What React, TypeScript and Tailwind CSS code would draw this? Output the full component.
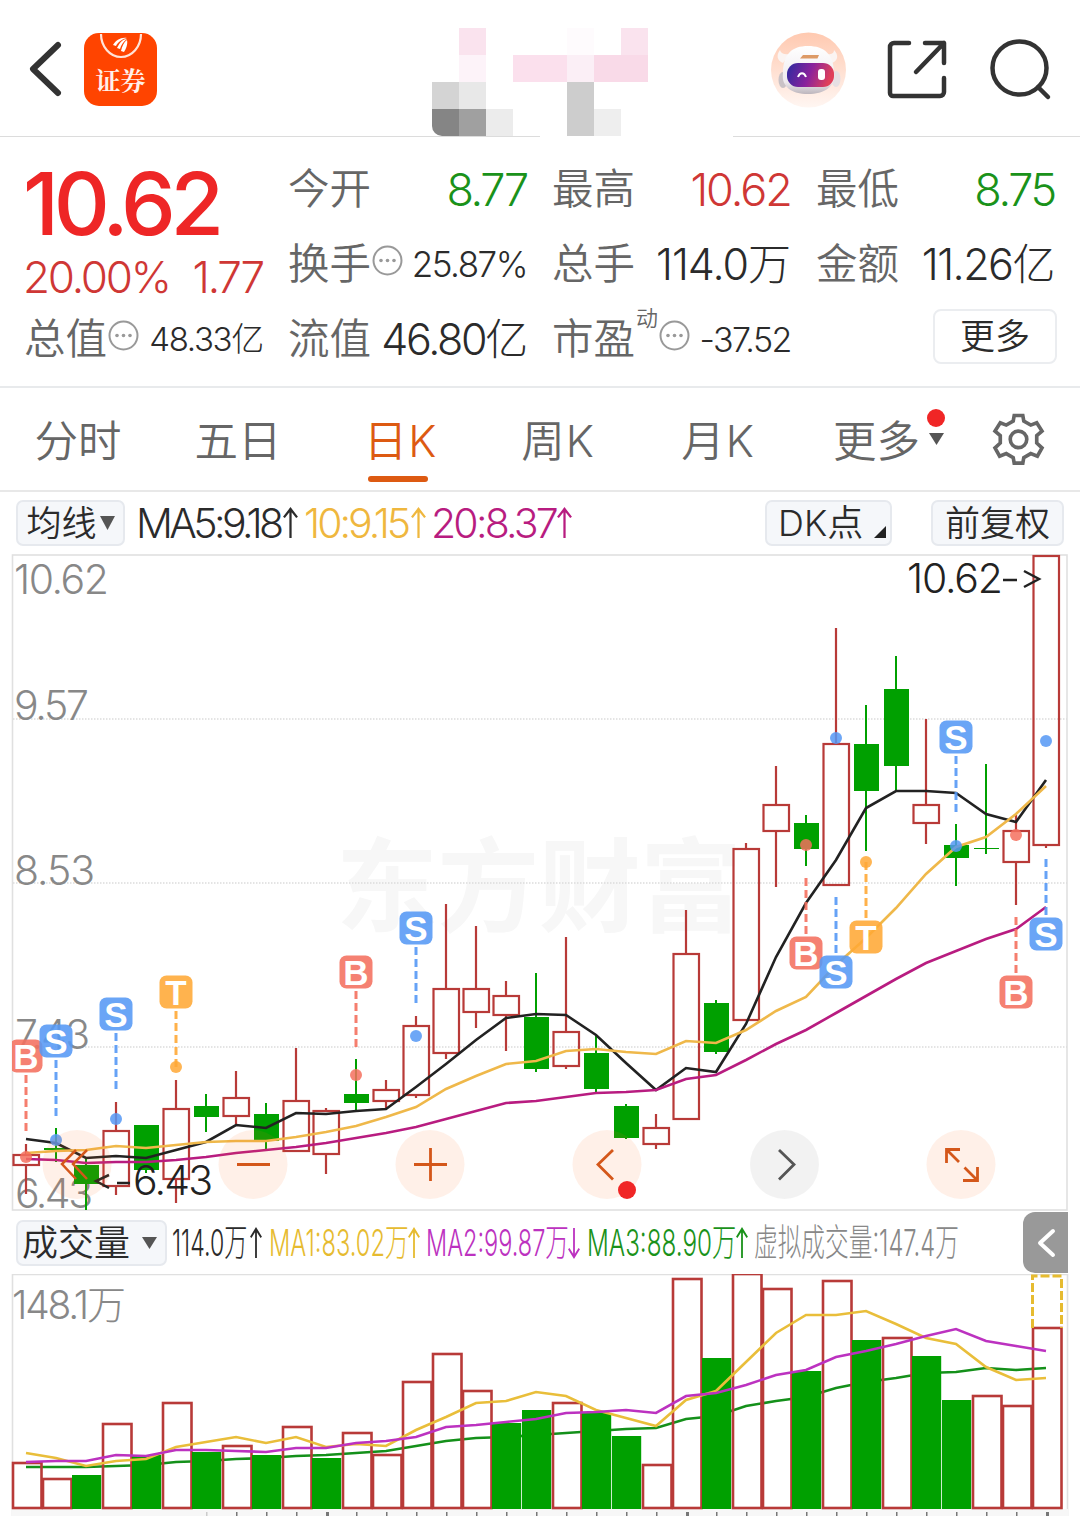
import type { ReactNode } from "react";

const STEP = 30;
const FIRST_X = 26;
const cx = (i: number) => FIRST_X + i * STEP;

const RED = "#b83a38";
const GREEN = "#00a000";

type Candle = [up: number, high: number, top: number, bottom: number, low: number];

const CANDLES: Candle[] = [
  [1, 1144, 1155, 1165, 1194],
  [0, 1128, 1148, 1150, 1162],
  [0, 1158, 1165, 1184, 1210],
  [1, 1102, 1131, 1186, 1195],
  [0, 1125, 1125, 1170, 1173],
  [1, 1080, 1109, 1179, 1203],
  [0, 1094, 1106, 1117, 1132],
  [1, 1071, 1098, 1116, 1124],
  [0, 1103, 1114, 1141, 1150],
  [1, 1048, 1101, 1151, 1151],
  [1, 1108, 1111, 1154, 1174],
  [0, 1059, 1094, 1103, 1111],
  [1, 1080, 1090, 1101, 1108],
  [1, 1016, 1026, 1095, 1098],
  [1, 904, 989, 1053, 1059],
  [1, 926, 989, 1012, 1028],
  [1, 981, 996, 1015, 1051],
  [0, 973, 1017, 1069, 1072],
  [1, 937, 1032, 1066, 1069],
  [0, 1036, 1053, 1089, 1092],
  [0, 1104, 1106, 1138, 1139],
  [1, 1114, 1128, 1144, 1149],
  [1, 910, 954, 1119, 1119],
  [0, 1000, 1003, 1052, 1054],
  [1, 843, 849, 1020, 1020],
  [1, 766, 805, 831, 887],
  [0, 815, 823, 849, 866],
  [1, 628, 744, 885, 885],
  [0, 705, 744, 791, 851],
  [0, 656, 689, 766, 791],
  [1, 719, 805, 823, 844],
  [0, 824, 845, 858, 886],
  [0, 764, 848, 849, 854],
  [1, 815, 831, 862, 905],
  [1, 556, 556, 845, 848],
];

const MA5 = [1139, 1143, 1158, 1156, 1158, 1150, 1142, 1125, 1128, 1113, 1114, 1111, 1109, 1087, 1064, 1040, 1018, 1014, 1015, 1035, 1063, 1090, 1068, 1072, 1024, 957, 903, 860, 808, 791, 791, 793, 814, 822, 780];
const MA10 = [1153, 1151, 1150, 1146, 1148, 1145, 1142, 1141, 1141, 1137, 1132, 1126, 1117, 1107, 1089, 1076, 1064, 1061, 1051, 1049, 1052, 1054, 1041, 1043, 1030, 1011, 997, 965, 938, 908, 874, 847, 837, 814, 786];
const MA20 = [1159, 1160, 1163, 1162, 1162, 1160, 1157, 1153, 1150, 1147, 1143, 1138, 1133, 1127, 1119, 1111, 1103, 1101, 1097, 1093, 1092, 1090, 1079, 1075, 1060, 1044, 1030, 1013, 996, 979, 963, 951, 939, 929, 907];

// [is red, top of the bar]
const VOLUMES: [number, number][] = [
  [1, 1463], [1, 1479], [0, 1476], [1, 1424], [0, 1456], [1, 1403], [0, 1453],
  [1, 1446], [0, 1456], [1, 1427], [0, 1459], [1, 1433], [1, 1455], [1, 1382],
  [1, 1354], [1, 1391], [0, 1424], [0, 1411], [1, 1403], [0, 1414], [0, 1437],
  [1, 1465], [1, 1279], [0, 1359], [1, 1274], [1, 1289], [0, 1372], [1, 1281],
  [0, 1341], [1, 1338], [0, 1357], [0, 1401], [1, 1396], [1, 1406], [1, 1328],
];
const VOL_MA1 = [1453, 1458, 1466, 1461, 1459, 1447, 1442, 1437, 1443, 1437, 1447, 1444, 1446, 1430, 1417, 1403, 1401, 1392, 1396, 1410, 1418, 1426, 1400, 1391, 1362, 1333, 1315, 1315, 1311, 1324, 1338, 1344, 1367, 1380, 1378];
const VOL_MA2 = [1462, 1461, 1461, 1455, 1456, 1450, 1450, 1451, 1452, 1448, 1448, 1443, 1441, 1437, 1427, 1425, 1422, 1419, 1413, 1412, 1410, 1413, 1396, 1393, 1385, 1375, 1370, 1357, 1351, 1344, 1336, 1329, 1341, 1346, 1351];
const VOL_MA3 = [1467, 1467, 1467, 1466, 1465, 1462, 1461, 1459, 1458, 1456, 1455, 1453, 1451, 1446, 1441, 1438, 1437, 1435, 1433, 1431, 1429, 1428, 1419, 1416, 1406, 1401, 1397, 1388, 1382, 1378, 1373, 1372, 1368, 1370, 1368];

type Kind = "B" | "S" | "T";
const MARK_COLOR: Record<Kind, string> = { B: "#f4705e", S: "#5598f5", T: "#ffa836" };

// candle index, letter, badge centre, signal dot, start of the dashes
const MARKS: [number, Kind, number, number, number][] = [
  [0, "B", 1056, 1157, 1075],
  [1, "S", 1041, 1140, 1060],
  [3, "S", 1014, 1119, 1033],
  [5, "T", 992, 1067, 1011],
  [11, "B", 972, 1075, 991],
  [13, "S", 928, 1036, 947],
  [26, "B", 953, 845, 878],
  [27, "S", 972, 738, 897],
  [28, "T", 937, 862, 862],
  [31, "S", 737, 846, 756],
  [33, "B", 992, 835, 917],
  [34, "S", 934, 741, 859],
];

// 8 x 4 blocks over the stock name
const MOSAIC = [
  "", "#fae3ee", "", "", "", "#fefbfd", "", "#fae3ee",
  "", "#fdf3f9", "", "#fbe0ed", "#fbe0ed", "#fbeff6", "#f9dae8", "#f9dae8",
  "#d4d4d4", "#e8e8e8", "", "", "", "#cdcdcd", "", "",
  "#858585", "#a0a0a0", "#ececec", "", "", "#cdcdcd", "#eeeeee", "",
];

const line = (ys: number[]) => ys.map((y, i) => `${cx(i)},${y}`).join(" ");

function Header() {
  return (
    <header className="flex h-[137px] flex-col">
      <div className="flex h-[136px] items-start">
        <svg className="ml-[28px] mt-[39px] h-[60px] w-[36px]" viewBox="0 0 36 60" fill="none" stroke="#333" strokeWidth="6" strokeLinecap="round" strokeLinejoin="round">
          <path d="M30 6 5 30l25 24" />
        </svg>
        <div className="ml-[20px] mt-[33px] flex h-[73px] w-[73px] flex-col items-center rounded-[15px] bg-[#ff4400]">
          <svg className="h-[27px] w-[44px]" viewBox="0 0 44 27" fill="none">
            <path d="M2 1a20 23 0 0 0 40 0" stroke="#ffe3d8" strokeWidth="2.200" />
            <path d="M14 12c3-5 8-8 14-7-5 1-9 4-11 8z M18 15c3-6 6-9 10-9-4 3-6 6-7 10z M22 18c1-5 3-9 6-11 1 4-1 9-3 12z" fill="#fff" />
          </svg>
          <span className="mt-[2px] font-['Noto_Serif_CJK_SC','Noto_Sans_CJK_SC',serif] text-[25px] font-bold leading-[34px] text-[#fff1ea]">证券</span>
        </div>
        <div className="ml-[275px] mt-[28px] grid h-[108px] w-[216px] grid-cols-8 grid-rows-4 overflow-hidden rounded-bl-[10px]">
          {MOSAIC.map((c, i) => (
            <div key={i} style={{ backgroundColor: c || "transparent" }} />
          ))}
        </div>
        <svg className="ml-[122px] mt-[31px] h-[78px] w-[78px]" viewBox="0 0 78 78">
          <defs>
            <linearGradient id="halo" x1="0" y1="0" x2="0" y2="1">
              <stop offset="0" stopColor="#ffc9b0" />
              <stop offset="1" stopColor="#fff6f2" />
            </linearGradient>
            <linearGradient id="visor" x1="0" y1="0" x2="1" y2="0.2">
              <stop offset="0" stopColor="#2b2ba0" />
              <stop offset="0.55" stopColor="#8a229c" />
              <stop offset="1" stopColor="#e0405a" />
            </linearGradient>
            <linearGradient id="shell" x1="0" y1="0" x2="0" y2="1">
              <stop offset="0" stopColor="#ffffff" />
              <stop offset="0.75" stopColor="#eeeaee" />
              <stop offset="1" stopColor="#bdb6bd" />
            </linearGradient>
          </defs>
          <circle cx="38.500" cy="39" r="37.500" fill="url(#halo)" />
          <path d="M10 19c-4 5-3 11 3 13l7-9c-5 1-9 0-10-4z M64 19c5 5 4 11-2 13l-7-9c5 1 9 0 9-4z" fill="#fbf4f2" />
          <ellipse cx="13" cy="49" rx="4.500" ry="8" fill="#c9c2c6" />
          <ellipse cx="66" cy="48" rx="4.500" ry="8" fill="#e6e0e3" />
          <path d="M13 42c0-19 9-27 25-27s26 8 26 27c2 14-10 21-26 21s-27-7-25-21z" fill="url(#shell)" />
          <rect x="17" y="32" width="47" height="24" rx="11" fill="url(#visor)" />
          <path d="M30 27.500 33 24h16l-1.500 3.500z" fill="#dd9a66" />
          <path d="M28 46c2-5 6-5 8 0" fill="none" stroke="#fff" strokeWidth="2" />
          <rect x="48" y="38" width="7" height="11" rx="3" fill="#fff" />
        </svg>
        <svg className="ml-[38px] mt-[38px] h-[62px] w-[62px]" viewBox="0 0 62 62" fill="none" stroke="#333" strokeWidth="4.500" strokeLinecap="round" strokeLinejoin="round">
          <path d="M23 5H8a4 4 0 0 0-4 4v46a3 3 0 0 0 3 3h47a4 4 0 0 0 4-4V40" />
          <path d="M39 5h19v20M58 5 30 34" />
        </svg>
        <svg className="ml-[41px] mt-[37px] h-[64px] w-[64px]" viewBox="0 0 64 64" fill="none" stroke="#333" strokeWidth="4.500" strokeLinecap="round">
          <ellipse cx="30.500" cy="31" rx="27" ry="26.500" />
          <path d="m49 50 10 10" />
        </svg>
      </div>
      <div className="flex h-px justify-between">
        <div className="w-[540px] bg-[#dcdcdc]" />
        <div className="w-[347px] bg-[#dcdcdc]" />
      </div>
    </header>
  );
}

function Hint() {
  return (
    <svg className="mb-[8px] ml-px h-[31px] w-[31px] shrink-0" viewBox="0 0 31 31">
      <circle cx="15.500" cy="15.500" r="14" fill="none" stroke="#999" strokeWidth="2" />
      <circle cx="9" cy="15.500" r="1.800" fill="#999" />
      <circle cx="15.500" cy="15.500" r="1.800" fill="#999" />
      <circle cx="22" cy="15.500" r="1.800" fill="#999" />
    </svg>
  );
}

function Arrow({ className, down }: { className: string; down?: boolean }) {
  return (
    <svg className={`inline-block shrink-0 overflow-visible ${className}`} viewBox="0 0 16 32" preserveAspectRatio="none" fill="none" stroke="currentColor" strokeWidth="2.400">
      <path d={down ? "M8 0v31M1 22l7 9 7-9" : "M8 32V1M1 10l7-9 7 9"} />
    </svg>
  );
}

function Stat({ label, className, children }: { label: ReactNode; className: string; children: string }) {
  return (
    <div className="flex h-[75px] items-center justify-between whitespace-nowrap">
      <span className="-ml-px flex items-center text-[41.500px] font-[350] text-[#666]">{label}</span>
      <span className={className}>{children}</span>
    </div>
  );
}

function Quote() {
  return (
    <section className="grid h-[251px] grid-cols-4 content-start gap-x-[26px] border-b-2 border-[#e8eaec] px-[25px] pt-[15px]">
      <div className="row-span-2 h-[150px] whitespace-nowrap">
        <div className="-ml-[2px] h-[92px] pt-[7px] text-[87px] font-[450] leading-[90px] tracking-[-5.300px] text-[#ee2626]">10.62</div>
        <div className="-ml-[2px] flex h-[58px] items-center justify-between pt-[8px] text-[44px] leading-[50px] tracking-[-2.200px] text-[#cf3735]">
          <span>20.00%</span>
          <span>1.77</span>
        </div>
      </div>
      <Stat label="今开" className="text-[45px] tracking-[-2.300px] text-[#1a921a]">8.77</Stat>
      <Stat label="最高" className="text-[45px] tracking-[-2px] text-[#cf3735]">10.62</Stat>
      <Stat label="最低" className="text-[45px] tracking-[-2.300px] text-[#1a921a]">8.75</Stat>
      <Stat label={<>换手<Hint /></>} className="text-[35px] tracking-[-1.500px]">25.87%</Stat>
      <Stat label="总手" className="mr-px text-[43px] tracking-[-1px]">114.0万</Stat>
      <Stat label="金额" className="mr-px text-[43px] tracking-[-1.500px]">11.26亿</Stat>
      <Stat label={<>总值<Hint /></>} className="text-[33px] tracking-[-1.300px]">48.33亿</Stat>
      <Stat label="流值" className="mr-px text-[43px] tracking-[-2.300px]">46.80亿</Stat>
      <Stat
        label={<>市盈<span className="ml-px self-start text-[22px] leading-[20px]">动</span><Hint /></>}
        className="text-[34px] tracking-[-1.500px]"
      >
        -37.52
      </Stat>
      <button className="-mr-[2px] mt-[7px] flex h-[55px] w-[124px] items-center justify-center justify-self-end rounded-[8px] border-2 border-[#ebedf0] text-[35px] font-[350]">
        更多
      </button>
    </section>
  );
}

const TABS = [
  { label: "分时", cls: "ml-[34px] w-[88px]" },
  { label: "五日", cls: "ml-[72px] w-[88px]" },
  { label: "日K", cls: "ml-[80px] w-[72px] tracking-[1px]", active: true },
  { label: "周K", cls: "ml-[85px] w-[78px] tracking-[1px]" },
  { label: "月K", cls: "ml-[82px] w-[78px] tracking-[1px]" },
];

function Tabs() {
  return (
    <nav className="flex h-[104px] shrink-0 items-center border-b-2 border-[#e8e8e8] text-[43.500px] font-[350] text-[#666]">
      {TABS.map((t) => (
        <div key={t.label} className={`flex h-full flex-col items-center whitespace-nowrap ${t.cls}`}>
          <span className={`mt-[21px] leading-[64px] ${t.active ? "pl-[5px] text-[#dd5a12]" : ""}`}>{t.label}</span>
          {t.active && <span className="mt-[3px] h-[6px] w-[60px] shrink-0 rounded-full bg-[#dd5a12]" />}
        </div>
      ))}
      <div className="ml-[76px] flex h-full w-[113px] items-start">
        <span className="mt-[21px] leading-[64px]">更多</span>
        <div className="ml-[7px] mt-[21px] flex flex-col items-center gap-[6px]">
          <span className="h-[18px] w-[18px] rounded-full bg-[#f02626]" />
          <svg className="h-[12px] w-[15px]" viewBox="0 0 15 12"><path d="M0 0h15L7.500 12z" fill="#555" /></svg>
        </div>
      </div>
      <svg className="ml-[46px] h-[55px] w-[53px]" viewBox="515 95 160 165" fill="none" stroke="#666" strokeWidth="11">
        <path d="M582 105h26l3 17 21 12 18-7 16 25-16 14v22l16 15-14 25-20-8-21 12-3 17h-26l-3-17-21-12-20 8-14-25 16-15v-22l-16-14 16-25 18 7 21-12z" />
        <circle cx="595" cy="177" r="25" />
      </svg>
    </nav>
  );
}

function MaBar() {
  return (
    <div className="flex h-[62px] items-start whitespace-nowrap pl-[16px] pr-[16px] pt-[8px] text-[41px] leading-[46px]">
      <div className="flex h-[46px] w-[109px] items-center justify-center gap-[3px] rounded-[7px] border-2 border-[#e6e9ee] bg-[#f5f7fa] text-[35px] font-[350]">
        <span>均线</span>
        <svg className="h-[14px] w-[15px]" viewBox="0 0 15 14"><path d="M0 0h15L7.500 14z" fill="#555" /></svg>
      </div>
      <div className="ml-[11px] flex w-[168px] items-center">
        <span className="w-[147px] tracking-[-3.600px]">MA5:9.18</span>
        <Arrow className="h-[30px] w-[15px]" />
      </div>
      <div className="flex w-[127px] items-center text-[#efb73e]">
        <span className="w-[107px] tracking-[-3px]">10:9.15</span>
        <Arrow className="h-[30px] w-[15px]" />
      </div>
      <div className="flex w-[146px] items-center text-[#b81c80]">
        <span className="w-[126px] tracking-[-2.800px]">20:8.37</span>
        <Arrow className="h-[30px] w-[15px]" />
      </div>
      <div className="ml-auto flex h-[46px] w-[127px] items-center justify-between rounded-[7px] border-2 border-[#e6e9ee] bg-[#f5f7fa] pl-[11px] pr-[4px] text-[36px] font-[350]">
        <span>DK点</span>
        <svg className="mt-[18px] h-[12px] w-[12px]" viewBox="0 0 12 12"><path d="M12 0v12H0z" fill="#222" /></svg>
      </div>
      <div className="ml-[39px] flex h-[46px] w-[133px] items-center justify-center rounded-[7px] border-2 border-[#e6e9ee] bg-[#f5f7fa] text-[35px] font-[350]">
        前复权
      </div>
    </div>
  );
}

function KLine() {
  return (
    <svg className="block h-[657px] w-[1080px] shrink-0" viewBox="0 554 1080 657" fill="none">
      <defs>
        <clipPath id="plot"><rect x="12" y="554" width="1056" height="657" /></clipPath>
      </defs>
      <text x="336" y="924" fontSize="102" fontWeight="700" fill="#f7f7f7" textLength="406">东方财富</text>
      <rect x="12.500" y="555" width="1054.500" height="655" stroke="#e0e0e0" strokeWidth="1.600" />
      {[719, 883, 1047].map((y) => (
        <line key={y} x1="13" x2="1067" y1={y} y2={y} stroke="#dcdcdc" strokeWidth="1.300" strokeDasharray="1.500 1.500" />
      ))}
      <g fill="#888" fontSize="41">
        <text x="14" y="594" textLength="95">10.62</text>
        <text x="14" y="720" textLength="75">9.57</text>
        <text x="14" y="885" textLength="81">8.53</text>
        <text x="15" y="1049" textLength="75">7.43</text>
        <text x="15" y="1208" textLength="78">6.43</text>
      </g>
      {CANDLES.map(([up, high, top, bottom, low], i) =>
        up ? (
          <g key={i} stroke={RED} strokeWidth="2.200">
            <path d={`M${cx(i)} ${high}V${top}M${cx(i)} ${bottom}V${low}`} />
            <rect x={cx(i) - 12.5} y={top} width="25.500" height={bottom - top} />
          </g>
        ) : (
          <g key={i} fill={GREEN}>
            <rect x={cx(i) - 1} y={high} width="2" height={low - high} />
            <rect x={cx(i) - 12} y={top} width="25" height={bottom - top} />
          </g>
        ),
      )}
      <g strokeWidth="2.600">
        <polyline points={line(MA5)} stroke="#222" />
        <polyline points={line(MA10)} stroke="#efb84a" />
        <polyline points={line(MA20)} stroke="#b81c80" />
      </g>
      <g clipPath="url(#plot)">
        {MARKS.map(([i, kind, y, dot, dash]) => (
          <g key={i} fill={MARK_COLOR[kind]} fillOpacity="0.880">
            <line x1={cx(i)} x2={cx(i)} y1={dash} y2={dash + 56} stroke={MARK_COLOR[kind]} strokeWidth="3" strokeDasharray="8 4" strokeOpacity="0.900" />
            <circle cx={cx(i)} cy={dot} r="6" fillOpacity="0.850" />
            <rect x={cx(i) - 16.5} y={y - 16.5} width="33" height="33" rx="7" />
            <text x={cx(i)} y={y + 12.5} textAnchor="middle" fontFamily="Liberation Sans" fontSize="35" fontWeight="700" fill="#fff" fillOpacity="1">{kind}</text>
          </g>
        ))}
      </g>
      <g fill="#222" fontSize="41">
        <text x="907" y="593" textLength="96">10.62</text>
        <text x="133" y="1195" textLength="80">6.43</text>
      </g>
      <path d="M1003 580h14M1024 571l15 8-15 8" stroke="#222" strokeWidth="2.500" />
      <path d="M109 1175 96 1181l13 7M117 1183h13" stroke="#222" strokeWidth="2.500" />
      <g fill="#ff6a1a" fillOpacity="0.100">
        {[77, 253, 430, 607, 961].map((x) => (
          <circle key={x} cx={x} cy="1164.500" r="34.500" />
        ))}
      </g>
      <circle cx="784.500" cy="1164.500" r="34.500" fill="#000" fillOpacity="0.050" />
      <g stroke="#d4571a" strokeWidth="2.800">
        <path d="M76 1150 62 1164l14 15M87 1150l-14 14 14 15" strokeWidth="2.500" />
        <path d="M237 1164.500h33M414 1164.500h33M430.500 1148v33" />
        <path d="M613 1150l-15 14.500 15 15" />
        <path d="M946.500 1163v-13.500h13.500M947 1150l12 12M977.500 1167v13.500H963M977 1180l-12.500-12.500" />
      </g>
      <path d="M779 1150l15 14.500-15 15" stroke="#555" strokeWidth="2.800" />
      <circle cx="627" cy="1190" r="9" fill="#f02626" />
    </svg>
  );
}

function VolumeBar() {
  return (
    <div className="flex h-[63px] items-start whitespace-nowrap pl-[16px] text-[37px] leading-[46px]">
      <div className="mt-[9px] flex h-[46px] w-[151px] shrink-0 items-center justify-between rounded-[7px] border-2 border-[#e6e9ee] bg-[#f5f7fa] pl-[4px] pr-[8px] text-[36px] font-[350]">
        <span>成交量</span>
        <svg className="h-[12px] w-[15px]" viewBox="0 0 15 12"><path d="M0 0h15L7.500 12z" fill="#555" /></svg>
      </div>
      <div className="mt-[9px] flex w-[856px]">
        <div className="ml-[5px] flex w-[97px] shrink-0 items-center">
          <span className="w-[78px] shrink-0 origin-left scale-x-[0.625]">114.0万</span>
          <Arrow className="h-[30px] w-[12px]" />
        </div>
        <div className="flex w-[157px] shrink-0 items-center text-[#e6bb30]">
          <span className="w-[139px] shrink-0 origin-left scale-x-[0.640]">MA1:83.02万</span>
          <Arrow className="h-[30px] w-[12px]" />
        </div>
        <div className="flex w-[161px] shrink-0 items-center text-[#bc32c0]">
          <span className="w-[142px] shrink-0 origin-left scale-x-[0.635]">MA2:99.87万</span>
          <Arrow className="h-[30px] w-[12px]" down />
        </div>
        <div className="flex w-[167px] shrink-0 items-center text-[#1a921a]">
          <span className="w-[149px] shrink-0 origin-left scale-x-[0.655]">MA3:88.90万</span>
          <Arrow className="h-[30px] w-[12px]" />
        </div>
        <span className="w-[200px] shrink-0 origin-left scale-x-[0.640] text-[#888]">虚拟成交量:147.4万</span>
      </div>
      <button className="mt-px flex h-[61px] w-[45px] shrink-0 items-center justify-center rounded-l-[12px] bg-[#999]">
        <svg className="h-[30px] w-[20px]" viewBox="0 0 20 30" fill="none" stroke="#fff" strokeWidth="4" strokeLinecap="round" strokeLinejoin="round">
          <path d="M17 3 4 15l13 12" />
        </svg>
      </button>
    </div>
  );
}

function Volume() {
  return (
    <svg className="block h-[242px] w-[1080px] shrink-0" viewBox="0 1274 1080 242" fill="none">
      <path d="M12.500 1516V1274.500H1067.500V1516" stroke="#e0e0e0" strokeWidth="1.600" />
      <rect x="12" y="1509" width="1056" height="7" fill="#f7f7f7" />
      <text x="12" y="1319" fontSize="39" fill="#888" textLength="114">148.1万</text>
      <polyline points={line(VOL_MA3)} stroke="#14901a" strokeWidth="2.600" />
      {VOLUMES.map(([up, top], i) =>
        up ? (
          <rect key={i} x={cx(i) - 13} y={top} width="28.500" height={1508 - top} stroke={RED} strokeWidth="2.600" />
        ) : (
          <rect key={i} x={cx(i) - 14} y={top - 1} width="29.200" height={1510 - top} fill={GREEN} />
        ),
      )}
      <path d="M1032.500 1328V1276H1061.500V1328" stroke="#e6bb30" strokeWidth="3" strokeDasharray="9 3" />
      <g strokeWidth="2.600">
        <polyline points={line(VOL_MA1)} stroke="#e9be3a" />
        <polyline points={line(VOL_MA2)} stroke="#bc32c0" />
      </g>
      {Array.from({ length: 29 }, (_, k) => (
        <rect key={k} x={206 + k * 30} y="1512" width={k % 12 === 4 ? 3 : 1.5} height="4" fill={k === 0 ? "#ccc" : "#777"} />
      ))}
    </svg>
  );
}

export default function App() {
  return (
    <div className="flex h-[1516px] w-[1080px] flex-col overflow-hidden bg-white font-[Inter,'Noto_Sans_CJK_SC',sans-serif] font-light text-[#2b2b2b]">
      <Header />
      <Quote />
      <Tabs />
      <MaBar />
      <KLine />
      <VolumeBar />
      <Volume />
    </div>
  );
}
